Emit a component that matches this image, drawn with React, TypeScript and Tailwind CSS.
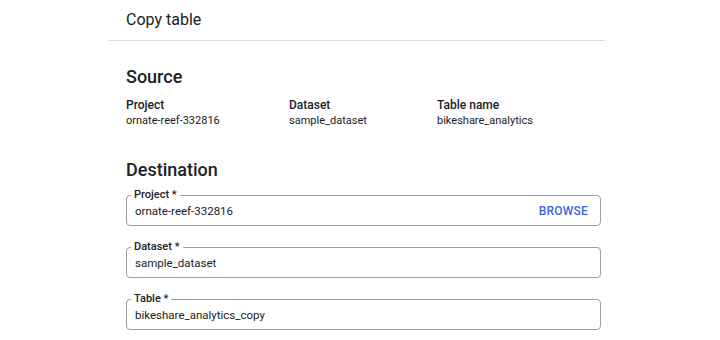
import React from 'react';

interface FieldProps {
  label: string;
  value: string;
  action?: string;
}

const sources = [
  { label: 'Project', value: 'ornate-reef-332816', width: 'w-[163px]' },
  { label: 'Dataset', value: 'sample_dataset', width: 'w-[148px]' },
  { label: 'Table name', value: 'bikeshare_analytics', width: 'w-auto' },
];

const Field: React.FC<FieldProps> = ({ label, value, action }) => (
  <div className="relative h-[31px] w-[475px] rounded-[4px] border border-[#9aa0a6] flex items-center pl-[8px] pr-[12px]">
    <span className="absolute -top-[8px] left-[4px] bg-white px-[3px] text-[11px] leading-[14px] font-medium text-[#202124]">
      {label}
    </span>
    <span className="flex-1 text-[11.5px] leading-[16px] text-[#202124] pt-[1px]">{value}</span>
    {action && (
      <span className="text-[12px] font-medium tracking-[0.2px] text-[#3f66d9] pt-[1px]">{action}</span>
    )}
  </div>
);

const App: React.FC = () => {
  return (
    <div className="w-[720px] h-[340px] bg-white font-['Roboto',sans-serif] text-[#202124] overflow-hidden">
      <div className="ml-[108px] w-[497px]">
        <div className="h-[41px] border-b border-[#dadce0] pl-[18px] flex items-center">
          <h1 className="text-[16px] leading-[20px]">Copy table</h1>
        </div>

        <div className="pl-[18px]">
          <h2 className="mt-[24px] text-[18px] leading-[24px] font-medium">Source</h2>
          <div className="mt-[8px] flex">
            {sources.map((s) => (
              <div key={s.label} className={s.width}>
                <p className="text-[12px] leading-[16px] font-medium">{s.label}</p>
                <p className="text-[11px] leading-[16px]">{s.value}</p>
              </div>
            ))}
          </div>

          <h2 className="mt-[29px] text-[18px] leading-[24px] font-medium">Destination</h2>
          <div className="mt-[13px] flex flex-col gap-[21px]">
            <Field label="Project *" value="ornate-reef-332816" action="BROWSE" />
            <Field label="Dataset *" value="sample_dataset" />
            <Field label="Table *" value="bikeshare_analytics_copy" />
          </div>
        </div>
      </div>
    </div>
  );
};

export default App;
